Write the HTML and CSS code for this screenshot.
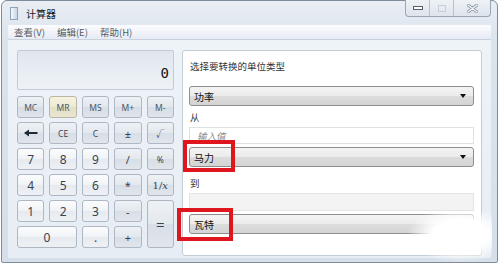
FILE: index.html
```html
<!DOCTYPE html>
<html>
<head>
<meta charset="utf-8">
<title>计算器</title>
<link rel="stylesheet" href="styles.css">
</head>
<body>
<div class="window">
    <div class="titlebar">
        <span class="app-icon"></span>
        <span class="title">计算器</span>
        <div class="caption">
            <div class="cap cap-min"><span></span></div>
            <div class="cap cap-max"><span></span></div>
            <div class="cap cap-close">
                <svg width="11" height="9" viewBox="0 0 11 9"><path d="M1 1 L10 8 M10 1 L1 8" stroke="#8a96a4" stroke-width="3" stroke-linecap="round"/><path d="M1 1 L10 8 M10 1 L1 8" stroke="#f4f6f8" stroke-width="1.4" stroke-linecap="round"/></svg>
            </div>
        </div>
    </div>
    <div class="menubar">
        <span>查看(V)</span>
        <span>编辑(E)</span>
        <span>帮助(H)</span>
    </div>
    <div class="client">
        <div class="calc">
            <div class="display">0</div>
            <div class="keys">
                <div class="key mem">MC</div>
                <div class="key mem hot">MR</div>
                <div class="key mem">MS</div>
                <div class="key mem">M+</div>
                <div class="key mem">M-</div>

                <div class="key op"><svg width="14" height="8" viewBox="0 0 14 8"><path d="M1 4 H13.5" stroke="#1e2a38" stroke-width="2"/><path d="M0 4 L5 0.5 V7.5 Z" fill="#1e2a38"/></svg></div>
                <div class="key op small">CE</div>
                <div class="key op small">C</div>
                <div class="key op">±</div>
                <div class="key op small">√</div>

                <div class="key">7</div>
                <div class="key">8</div>
                <div class="key">9</div>
                <div class="key op">/</div>
                <div class="key op small">%</div>

                <div class="key">4</div>
                <div class="key">5</div>
                <div class="key">6</div>
                <div class="key op">*</div>
                <div class="key op frac">1/<i>x</i></div>

                <div class="key">1</div>
                <div class="key">2</div>
                <div class="key">3</div>
                <div class="key op">-</div>
                <div class="key op equals">=</div>

                <div class="key zero">0</div>
                <div class="key">.</div>
                <div class="key op">+</div>
            </div>
        </div>
        <div class="converter">
            <div class="label first">选择要转换的单位类型</div>
            <div class="select"><span>功率</span><i class="arrow"></i></div>
            <div class="label">从</div>
            <div class="field"><span class="hint">输入值</span></div>
            <div class="select gap"><span>马力</span><i class="arrow"></i></div>
            <div class="label to">到</div>
            <div class="field result"></div>
            <div class="select gap"><span>瓦特</span><i class="arrow"></i></div>
        </div>
    </div>
</div>
<div class="mark mark-from"></div>
<div class="mark mark-to"></div>
<div class="smudge"></div>
</body>
</html>
```

FILE: styles.css
```css
html, body {
    margin : 0;
    background-color : #ffffff;
    font-family : "Noto Sans", "Noto Sans CJK SC", sans-serif;
}
.window {
    box-sizing : border-box;
    width : 497px;
    height : 263px;
    margin-left : 1px;
    border : 1px solid #7d8b9b;
    border-radius : 6px 6px 2px 2px;
    background : linear-gradient(#e9eef4, #dbe3ec 40px, #d6dfe9);
    padding : 0 6px 4px 6px;
    display : flex;
    flex-direction : column;
}
.titlebar {
    height : 24px;
    display : flex;
    align-items : center;
    padding-left : 2px;
}
.app-icon {
    width : 6px;
    height : 11px;
    border : 1px solid #8fa3b8;
    background : linear-gradient(90deg, #f4f8fc, #c8d6e4);
    margin-right : 8px;
}
.title {
    font-family : "Noto Sans CJK SC", sans-serif;
    font-size : 10px;
    color : #1c1c1c;
}
.caption {
    margin-left : auto;
    align-self : flex-start;
    margin-top : -1px;
    display : flex;
    height : 16px;
    border : 1px solid #9aa6b4;
    border-top : none;
    border-radius : 0 0 4px 4px;
    background : linear-gradient(#eef2f6, #dde4ec);
    overflow : hidden;
}
.cap {
    display : flex;
    align-items : center;
    justify-content : center;
    width : 23px;
    border-right : 1px solid #b9c3ce;
}
.cap-min span {
    width : 8px;
    height : 2px;
    border : 1px solid #56606c;
    background : #ffffff;
}
.cap-max span {
    width : 6px;
    height : 5px;
    border : 1px solid #c6ced7;
}
.cap-close {
    width : 36px;
    border-right : none;
}
.menubar {
    height : 15px;
    display : flex;
    align-items : center;
    gap : 12px;
    padding-left : 6px;
    background : linear-gradient(#fbfcfe, #e7ebf5);
    border-bottom : 1px solid #c9d2dd;
    box-sizing : border-box;
    font-family : "Noto Sans CJK SC", sans-serif;
    font-size : 9.5px;
    color : #555b63;
}
.client {
    flex : 1;
    display : flex;
    gap : 8px;
    padding : 10px 9px 2px 9px;
    background : linear-gradient(#eef3f8, #e6edf4);
}
.calc {
    width : 157px;
    display : flex;
    flex-direction : column;
    gap : 6px;
}
.display {
    box-sizing : border-box;
    height : 40px;
    border : 1px solid #c3ccd6;
    border-radius : 2px;
    background : linear-gradient(#dfe6ee, #e9eef4 60%, #eef2f7);
    font-family : "DejaVu Sans Mono", monospace;
    font-size : 14px;
    color : #111;
    text-align : right;
    padding : 14px 4px 0 0;
}
.keys {
    display : grid;
    grid-template-columns : repeat(5, 1fr);
    grid-template-rows : repeat(6, 22px);
    gap : 4px 5px;
}
.key {
    box-sizing : border-box;
    display : flex;
    align-items : center;
    justify-content : center;
    border : 1px solid #aeb7c2;
    border-radius : 3px;
    background : linear-gradient(#fbfcfd, #f0f3f6 50%, #e6eaef 51%, #eef1f4);
    font-size : 12px;
    color : #3a4350;
}
.key.op {
    background : linear-gradient(#eef2f6, #e3e8ee 50%, #d8dee6 51%, #e1e6ec);
    font-size : 11px;
}
.key.mem {
    background : linear-gradient(#edf1f5, #e1e7ed 50%, #d6dde5 51%, #dfe5eb);
    font-size : 8.5px;
    color : #4a5868;
}
.key.hot {
    background : linear-gradient(#f6f4e2, #ecead3 50%, #e2dfc4 51%, #e9e7d2);
    border-color : #b9b7a4;
}
.key.small {
    font-size : 8.5px;
}
.key.frac {
    font-family : "DejaVu Serif", serif;
    font-size : 10px;
}
.key.equals {
    grid-row : span 2;
    font-size : 15px;
}
.key.zero {
    grid-column : span 2;
}
.converter {
    flex : 1;
    box-sizing : border-box;
    border : 1px solid #c4ccd5;
    border-radius : 3px;
    background-color : #ffffff;
    padding : 8px 7px 0 6px;
    display : flex;
    flex-direction : column;
    font-family : "Noto Sans CJK SC", sans-serif;
    font-size : 9.5px;
    color : #333;
}
.label {
    line-height : 14px;
    padding-left : 1px;
    margin : 4px 0 3px 0;
}
.label.first {
    margin : 0 0 13px 0;
}
.label.to {
    margin-top : 9px;
}
.select {
    box-sizing : border-box;
    height : 20px;
    display : flex;
    align-items : center;
    padding : 0 7px 0 4px;
    border : 1px solid #8c8e90;
    border-radius : 3px;
    background : linear-gradient(#f4f4f4, #ebebeb 50%, #dcdcdc 51%, #d4d4d4);
    color : #111;
    font-size : 10px;
}
.select.gap {
    margin-top : 3px;
}
.arrow {
    margin-left : auto;
    width : 0;
    height : 0;
    border-left : 3.5px solid transparent;
    border-right : 3.5px solid transparent;
    border-top : 4px solid #111;
}
.field {
    box-sizing : border-box;
    height : 17px;
    border : 1px solid #dde2e7;
    display : flex;
    align-items : center;
    padding-left : 7px;
}
.field.result {
    height : 18px;
    background-color : #f3f3f3;
    border-color : #e4e4e4;
}
.hint {
    font-style : italic;
    color : #8c8c8c;
}
.mark {
    position : absolute;
    box-sizing : border-box;
    border : 4px solid #e0161f;
}
.mark-from {
    left : 183px;
    top : 140px;
    width : 52px;
    height : 32px;
}
.mark-to {
    left : 177px;
    top : 208px;
    width : 56px;
    height : 33px;
}
.smudge {
    position : absolute;
    left : 408px;
    top : 212px;
    width : 84px;
    height : 50px;
    background : radial-gradient(ellipse at 62% 45%, rgba(255,255,255,1) 38%, rgba(255,255,255,0) 72%);
}
```
